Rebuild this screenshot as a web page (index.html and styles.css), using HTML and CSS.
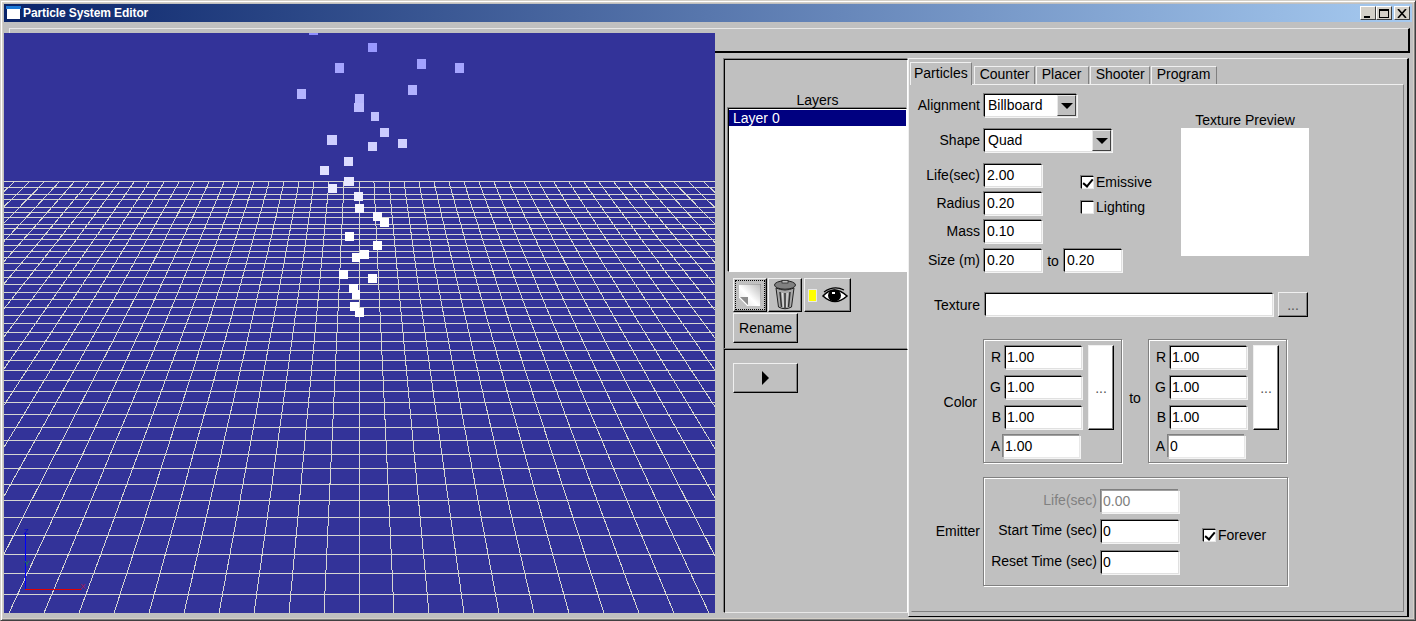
FILE: index.html
```html
<!DOCTYPE html>
<html lang="en">
<head>
  <meta charset="UTF-8">
  <title>Particle System Editor</title>
  <link rel="stylesheet" href="styles.css">
</head>
<body>
  <div class="window">
    <div class="titlebar">
      <svg class="title-icon" width="15" height="14" viewBox="0 0 15 14">
        <rect width="15" height="14" fill="#0a246a"/>
        <rect x="0" y="0" width="15" height="3" fill="#1c7ad8"/>
        <rect x="1" y="3" width="13" height="10" fill="#fff"/>
      </svg>
      <span class="title-text">Particle System Editor</span>
      <div class="caption-btns">
        <div class="caption-btn"><span class="glyph-min"></span></div>
        <div class="caption-btn"><span class="glyph-max"></span></div>
        <div class="caption-btn close">
          <svg width="10" height="9" viewBox="0 0 10 9"><path d="M1 0 L9 9 M9 0 L1 9" stroke="#000" stroke-width="1.6"/></svg>
        </div>
      </div>
    </div>

    <div class="toolbar"></div>

    <div class="main">
      <div class="viewport">
        <svg id="scene" width="711" height="580" viewBox="0 0 711 580"></svg>
      </div>

      <div class="side">
        <div class="side-top">
          <div class="layers-label">Layers</div>
          <div class="layer-list">
            <div class="layer-item">Layer 0</div>
          </div>
          <div class="icon-row">
            <div class="btn icon-btn new-btn">
              <div class="focus-box">
                <svg width="22" height="22" viewBox="0 0 22 22">
                  <defs>
                    <linearGradient id="pageFill" x1="1" y1="0" x2="0" y2="1">
                      <stop offset="0" stop-color="#b8b8b8"/>
                      <stop offset="0.55" stop-color="#fff"/>
                      <stop offset="1" stop-color="#e0e0e0"/>
                    </linearGradient>
                  </defs>
                  <path d="M0 0 H22 V22 H9 L0 13 Z" fill="url(#pageFill)"/>
                  <path d="M0 0 H22 V22" fill="none" stroke="#8a8a8a" stroke-width="1"/>
                  <path d="M0 13 L9 13 L9 22 Z" fill="#8c8c8c"/>
                  <path d="M0 13 L9 22" stroke="#fff" stroke-width="1.2"/>
                </svg>
              </div>
            </div>
            <div class="btn icon-btn trash-btn">
              <svg width="22" height="30" viewBox="0 0 22 30">
                <ellipse cx="11" cy="5" rx="10.5" ry="4.2" fill="#808080" stroke="#222"/>
                <rect x="8" y="0.5" width="6" height="2.5" fill="#bbb" stroke="#222" stroke-width="0.7"/>
                <path d="M2 8 L4.5 27 Q11 30.5 17.5 27 L20 8 Q11 12 2 8 Z" fill="#a8a8a8" stroke="#222"/>
                <path d="M6 12 L7.5 27 M11 13 V28 M16 12 L14.5 27" stroke="#333" stroke-width="1.5"/>
                <path d="M8.5 13 L9.3 27 M13.2 13 L12.7 27" stroke="#e4e4e4" stroke-width="1"/>
              </svg>
            </div>
            <div class="btn icon-btn eye-btn">
              <span class="swatch"></span>
              <svg width="26" height="17" viewBox="0 0 26 17">
                <path d="M1 9 Q12 -3 25 9 Q13 20 1 9 Z" fill="#fff" stroke="#000" stroke-width="1.6"/>
                <ellipse cx="12.5" cy="8.5" rx="6.5" ry="6" fill="#000"/>
                <rect x="10" y="5" width="3" height="2" fill="#fff"/>
                <path d="M2 5 Q12 -2 22 3" fill="none" stroke="#000" stroke-width="1.2"/>
              </svg>
            </div>
          </div>
          <div class="btn rename-btn">Rename</div>
        </div>
        <div class="side-bottom">
          <div class="btn play-btn"><span class="play-arrow"></span></div>
        </div>
      </div>

      <div class="tab-panel">
        <div class="tabs">
          <div class="tab active">Particles</div>
          <div class="tab">Counter</div>
          <div class="tab">Placer</div>
          <div class="tab">Shooter</div>
          <div class="tab">Program</div>
        </div>
        <div class="pane">
          <div class="top-section">
            <div class="fields">
              <div class="row align-row">
                <div class="lbl">Alignment</div>
                <div class="combo combo-short"><span class="combo-text">Billboard</span><span class="combo-btn"><span class="down-arrow"></span></span></div>
              </div>
              <div class="row shape-row">
                <div class="lbl">Shape</div>
                <div class="combo combo-long"><span class="combo-text">Quad</span><span class="combo-btn"><span class="down-arrow"></span></span></div>
              </div>
              <div class="life-block">
                <div class="life-rows">
                  <div class="row"><div class="lbl">Life(sec)</div><div class="field small">2.00</div></div>
                  <div class="row gap-row"><div class="lbl">Radius</div><div class="field small">0.20</div></div>
                  <div class="row gap-row"><div class="lbl">Mass</div><div class="field small">0.10</div></div>
                </div>
                <div class="checks">
                  <div class="check-row"><span class="check on"></span>Emissive</div>
                  <div class="check-row second"><span class="check"></span>Lighting</div>
                </div>
              </div>
              <div class="row size-row">
                <div class="lbl">Size (m)</div><div class="field small">0.20</div>
                <div class="to-small">to</div><div class="field small">0.20</div>
              </div>
            </div>
            <div class="preview">
              <div class="preview-title">Texture Preview</div>
              <div class="preview-box"></div>
            </div>
          </div>

          <div class="row texture-row">
            <div class="lbl">Texture</div>
            <div class="field texture-field"></div>
            <div class="btn dots-btn">...</div>
          </div>

          <div class="row color-row">
            <div class="lbl color-lbl">Color</div>
            <div class="group color-group">
              <div class="rgb-block">
                <div class="rgb-rows">
                  <div class="chan"><span class="letter">R</span><div class="field chan-field">1.00</div></div>
                  <div class="chan"><span class="letter">G</span><div class="field chan-field">1.00</div></div>
                  <div class="chan"><span class="letter">B</span><div class="field chan-field">1.00</div></div>
                </div>
                <div class="btn color-btn">...</div>
              </div>
              <div class="chan chan-a"><span class="letter">A</span><div class="field chan-field flat">1.00</div></div>
            </div>
            <div class="to-big">to</div>
            <div class="group color-group">
              <div class="rgb-block">
                <div class="rgb-rows">
                  <div class="chan"><span class="letter">R</span><div class="field chan-field">1.00</div></div>
                  <div class="chan"><span class="letter">G</span><div class="field chan-field">1.00</div></div>
                  <div class="chan"><span class="letter">B</span><div class="field chan-field">1.00</div></div>
                </div>
                <div class="btn color-btn">...</div>
              </div>
              <div class="chan chan-a"><span class="letter">A</span><div class="field chan-field flat">0</div></div>
            </div>
          </div>

          <div class="row emitter-row">
            <div class="lbl">Emitter</div>
            <div class="group emitter-group">
              <div class="emitter-rows">
                <div class="row"><div class="lbl wide disabled">Life(sec)</div><div class="field em-field flat disabled">0.00</div></div>
                <div class="row em-gap"><div class="lbl wide">Start Time (sec)</div><div class="field em-field">0</div></div>
                <div class="row em-gap last"><div class="lbl wide">Reset Time (sec)</div><div class="field em-field">0</div></div>
              </div>
              <div class="check-row forever"><span class="check on"></span>Forever</div>
            </div>
          </div>
        </div>
      </div>
    </div>
  </div>
  <script src="grid.js"></script>
</body>
</html>
```

FILE: styles.css
```css
* {
  box-sizing: border-box;
}
html, body {
  margin: 0;
  padding: 0;
  overflow: hidden;
}
body {
  font-family: "Liberation Sans", Arial, sans-serif;
  font-size: 14px;
  color: #000;
  background: #c0c0c0;
}
.window {
  width: 1416px;
  height: 621px;
  padding: 3px;
  background: #c0c0c0;
  border: 1px solid;
  border-color: #d4d0c8 #404040 #404040 #d4d0c8;
  box-shadow: inset 1px 1px #fff, inset -1px -1px #808080, inset 2px 2px #d4d0c8, inset -2px -2px #d4d0c8;
}
.titlebar {
  display: flex;
  align-items: center;
  height: 18px;
  padding: 0 2px;
  background: linear-gradient(to right, #0a246a, #a6caf0);
}
.title-icon {
  flex: none;
}
.title-text {
  margin-left: 2px;
  color: #fff;
  font-size: 12px;
  font-weight: bold;
  letter-spacing: -0.1px;
}
.caption-btns {
  display: flex;
  margin-left: auto;
}
.caption-btn {
  display: flex;
  align-items: center;
  justify-content: center;
  width: 16px;
  height: 14px;
  background: #d4d0c8;
  border: 1px solid;
  border-color: #fff #404040 #404040 #fff;
}
.caption-btn.close {
  margin-left: 2px;
}
.glyph-min {
  width: 6px;
  height: 2px;
  margin-top: 7px;
  margin-right: 2px;
  background: #000;
}
.glyph-max {
  width: 10px;
  height: 9px;
  border: 1px solid #000;
  border-top-width: 2px;
}

.toolbar {
  height: 25px;
  margin: 6px 2px 0 5px;
  border: 2px solid;
  border-color: #e8e8e8 #000 #000 #e8e8e8;
  border-top-width: 1px;
  border-left-width: 1px;
}
.main {
  position: relative;
  display: flex;
  height: 584px;
  margin-top: -20px;
}
.viewport {
  flex: none;
  width: 711px;
  height: 580px;
  background: #333399;
  overflow: hidden;
}
#scene {
  display: block;
}
.axis-label {
  font-family: "Liberation Sans", sans-serif;
  font-size: 8px;
}

.side {
  flex: none;
  display: flex;
  flex-direction: column;
  width: 184px;
  margin: 26px 0 4px 9px;
}
.side-top, .side-bottom {
  border: 1px solid;
  border-color: #000 #fff #e8e8e8 #000;
  box-shadow: -1px -1px #808080;
}
.side-top {
  height: 290px;
  padding: 32px 0 0 3px;
}
.side-bottom {
  flex: 1;
  padding: 13px 0 0 8px;
}
.layers-label {
  height: 16px;
  line-height: 16px;
  text-align: center;
}
.layer-list {
  height: 164px;
  background: #fff;
  border: 1px solid;
  border-color: #000 #fff #fff #000;
  box-shadow: -1px -1px #808080;
  padding-top: 1px;
}
.layer-item {
  height: 16px;
  line-height: 16px;
  padding-left: 4px;
  color: #fff;
  background: #000080;
}

.btn {
  display: flex;
  align-items: center;
  justify-content: center;
  background: #c0c0c0;
  border: 1px solid;
  border-color: #f0f0f0 #000 #000 #f0f0f0;
  box-shadow: inset -1px -1px #808080;
}
.icon-row {
  display: flex;
  height: 34px;
  margin: 6px 0 0 5px;
}
.icon-btn {
  height: 34px;
}
.new-btn {
  width: 34px;
}
.focus-box {
  display: flex;
  align-items: center;
  justify-content: center;
  width: 30px;
  height: 30px;
  border: 1px dotted #000;
}
.trash-btn {
  width: 34px;
  margin-left: 1px;
}
.eye-btn {
  width: 47px;
  margin-left: 2px;
  padding-top: 1px;
}
.swatch {
  width: 9px;
  height: 13px;
  margin-right: 5px;
  background: #ffff00;
  border: 1px solid #e8e8e8;
}
.rename-btn {
  width: 65px;
  height: 30px;
  margin: 1px 0 0 5px;
}
.play-btn {
  width: 65px;
  height: 30px;
}
.play-arrow {
  width: 0;
  height: 0;
  border-left: 7px solid #000;
  border-top: 7px solid transparent;
  border-bottom: 7px solid transparent;
}

.tab-panel {
  flex: none;
  width: 501px;
  margin: 25px 0 0 0;
  padding: 3px 0 0 1px;
  border: 1px solid;
  border-color: #f0f0f0 #000 #000 #f0f0f0;
  border-right-width: 2px;
}
.tabs {
  display: flex;
  align-items: flex-end;
  height: 22px;
}
.tab {
  height: 18px;
  line-height: 15px;
  padding: 0 5px;
  margin-right: 1px;
  border: 1px solid;
  border-color: #f0f0f0 #808080 transparent #f0f0f0;
  border-bottom: 0;
}
.tab.active {
  position: relative;
  height: 23px;
  line-height: 21px;
  margin: 0 2px -1px 0;
  padding: 0 3px;
  background: #c0c0c0;
  z-index: 1;
}
.tab:nth-child(2) {
  width: 61px;
}
.tab:nth-child(3) {
  width: 53px;
}
.tab:nth-child(4) {
  width: 60px;
}
.tab:nth-child(5) {
  width: 66px;
}
.pane {
  width: 493px;
  height: 528px;
  margin-left: 1px;
  border: 1px solid;
  border-color: #f0f0f0 #808080 #808080 #c0c0c0;
}

.top-section {
  display: flex;
}
.fields {
  width: 228px;
}
.row {
  display: flex;
  align-items: center;
}
.lbl {
  flex: none;
  width: 68px;
  margin-right: 4px;
  margin-bottom: 2px;
  text-align: right;
  white-space: nowrap;
}
.lbl.wide {
  width: 113px;
}
.disabled {
  color: #808080;
}
.gap-row {
  margin-top: 5px;
}
.size-row {
  margin-top: 6px;
}
.align-row {
  margin-top: 9px;
}
.shape-row {
  margin-top: 12px;
}
.life-block {
  display: flex;
  margin-top: 12px;
}
.checks {
  margin-left: 39px;
  padding-top: 11px;
}
.check-row {
  display: flex;
  align-items: center;
  height: 14px;
  white-space: nowrap;
}
.check-row.second {
  margin-top: 11px;
}
.check {
  flex: none;
  position: relative;
  width: 13px;
  height: 13px;
  margin-right: 2px;
  background: #fff;
  border: 1px solid;
  border-color: #000 #e8e8e8 #e8e8e8 #000;
  box-shadow: -1px -1px #808080;
}
.check.on::after {
  content: "";
  position: absolute;
  left: 3px;
  top: 0;
  width: 4px;
  height: 8px;
  border: solid #000;
  border-width: 0 2px 2px 0;
  transform: rotate(40deg);
}

.field, .combo {
  flex: none;
  height: 23px;
  line-height: 20px;
  background: #fff;
  border: 1px solid;
  border-color: #000 #e0e0e0 #e0e0e0 #000;
  box-shadow: -1px -1px #808080, 1px 1px #f4f4f4;
  padding-left: 1px;
  overflow: hidden;
}
.field.flat {
  border-color: #a0a0a0 #e8e8e8 #e8e8e8 #a0a0a0;
  box-shadow: -1px -1px #808080, 1px 1px #f4f4f4;
}
.field.small {
  width: 58px;
  padding-left: 2px;
}
.to-small {
  width: 22px;
  text-align: center;
}
.combo {
  display: flex;
  align-items: center;
  padding-left: 3px;
}
.combo-short {
  width: 93px;
}
.combo-long {
  width: 128px;
}
.combo-text {
  flex: 1;
  margin-bottom: 2px;
}
.combo-btn {
  display: flex;
  align-items: center;
  justify-content: center;
  width: 19px;
  height: 21px;
  background: #c0c0c0;
  border: 1px solid;
  border-color: #e8e8e8 #404040 #404040 #e8e8e8;
}
.down-arrow {
  width: 0;
  height: 0;
  border-top: 6px solid #000;
  border-left: 6px solid transparent;
  border-right: 6px solid transparent;
}
.preview {
  width: 128px;
  margin: 27px 0 0 41px;
}
.preview-title {
  height: 16px;
  line-height: 16px;
  text-align: center;
  white-space: nowrap;
}
.preview-box {
  height: 128px;
  background: #fff;
}

.texture-row {
  margin-top: 20px;
}
.texture-row .lbl {
  margin-bottom: 0;
}
.texture-field {
  width: 288px;
  margin-left: 1px;
}
.dots-btn {
  width: 30px;
  height: 25px;
  margin-left: 5px;
  color: #555;
}

.color-row {
  margin-top: 22px;
  align-items: center;
}
.color-lbl {
  width: 65px;
  margin: 2px 6px 0 0;
}
.group {
  flex: none;
  border: 1px solid #808080;
  box-shadow: inset 1px 1px #fff, 1px 1px #fff;
}
.color-group {
  width: 139px;
  height: 124px;
  padding-top: 6px;
}
.rgb-block {
  display: flex;
}
.chan {
  display: flex;
  align-items: center;
  margin-bottom: 7px;
}
.letter {
  width: 17px;
  margin-right: 4px;
  margin-bottom: 2px;
  text-align: right;
}
.chan-field {
  width: 77px;
  height: 23px;
}
.chan-a {
  margin-top: -1px;
  margin-bottom: 0;
}
.chan-a .letter {
  width: 16px;
  margin-right: 3px;
}
.color-btn {
  width: 26px;
  height: 85px;
  margin: -1px 0 0 6px;
  background: #fff;
  color: #555;
}
.to-big {
  width: 26px;
  margin-bottom: 6px;
  text-align: center;
}

.emitter-row {
  margin-top: 14px;
}
.emitter-group {
  display: flex;
  align-items: center;
  width: 305px;
  height: 109px;
  margin-left: -1px;
}
.em-field {
  width: 78px;
  height: 23px;
}
.em-gap {
  margin-top: 7px;
}
.em-gap.last {
  margin-top: 8px;
}
.forever {
  margin: 7px 0 0 24px;
}
```

FILE: grid.js
```js
var NS = "http://www.w3.org/2000/svg";
var scene = document.getElementById("scene");
var VP_X = 355, VP_Y = -174; // where the ground lines meet, above the window
var TOP = 148, BOTTOM = 580;
var LINE = "#d6d6d2";

// ground rows as read off the screen, in window pixels
var rows = [181,187,194,199,207,212,217,224,228,234,239,245,251,257,263,270,277,284,292,299,
  307,315,323,332,341,350,360,370,380,391,402,414,427,440,454,468,484,500,517,535,554,573,594];

function add(tag, attrs, text) {
  var el = document.createElementNS(NS, tag);
  for (var k in attrs) el.setAttribute(k, attrs[k]);
  if (text) el.textContent = text;
  scene.appendChild(el);
}

function line(x1, y1, x2, y2, color) {
  add("line", { x1: x1, y1: y1, x2: x2, y2: y2, stroke: color, "stroke-width": 1, "shape-rendering": "crispEdges" });
}

rows.forEach(function (y) {
  line(0, y - 33 + 0.5, 711, y - 33 + 0.5, LINE);
});

var spread = 35 / (BOTTOM - VP_Y);
for (var i = -30; i <= 30; i++) {
  var atTop = VP_X + i * spread * (TOP - VP_Y);
  var atBottom = VP_X + i * spread * (BOTTOM - VP_Y);
  line(atTop, TOP, atBottom, BOTTOM, LINE);
}

// axes
line(21.5, 500, 21.5, 556, "#0000ff");
line(21, 556.5, 77, 556.5, "#e00000");
add("text", { x: 22, y: 501, fill: "#0000cc", "class": "axis-label", "text-anchor": "middle" }, "Z");
add("text", { x: 23, y: 533, fill: "#1a8a3a", "class": "axis-label", "text-anchor": "middle" }, "Y");
add("text", { x: 79, y: 556, fill: "#aa1a55", "class": "axis-label", "text-anchor": "middle" }, "X");

// particles, x y w h in window pixels, brighter the closer they are to the emitter
var particles = [
  [309,26,9,9],[368,43,9,9],[335,63,9,10],[417,59,9,10],[455,63,9,10],[297,89,9,10],
  [408,85,9,10],[355,94,9,9],[354,103,10,9],[371,112,8,9],[380,128,9,9],[327,135,10,10],
  [398,139,9,9],[368,142,9,9],[344,157,9,9],[320,166,9,9],[344,177,10,9],[328,184,9,9],
  [354,192,9,9],[355,204,9,9],[373,212,9,9],[380,218,9,9],[345,232,9,9],[373,241,9,9],
  [360,250,9,9],[352,253,8,9],[339,270,9,9],[368,274,9,9],[349,284,9,9],[352,290,8,9],
  [350,302,9,9],[355,308,9,9]
];
particles.forEach(function (p) {
  var g = Math.min(255, Math.round(153 + (p[1] - 43) * 0.58));
  add("rect", { x: p[0] - 4, y: p[1] - 33, width: p[2], height: p[3], fill: "rgb(" + g + "," + g + ",255)" });
});
```
